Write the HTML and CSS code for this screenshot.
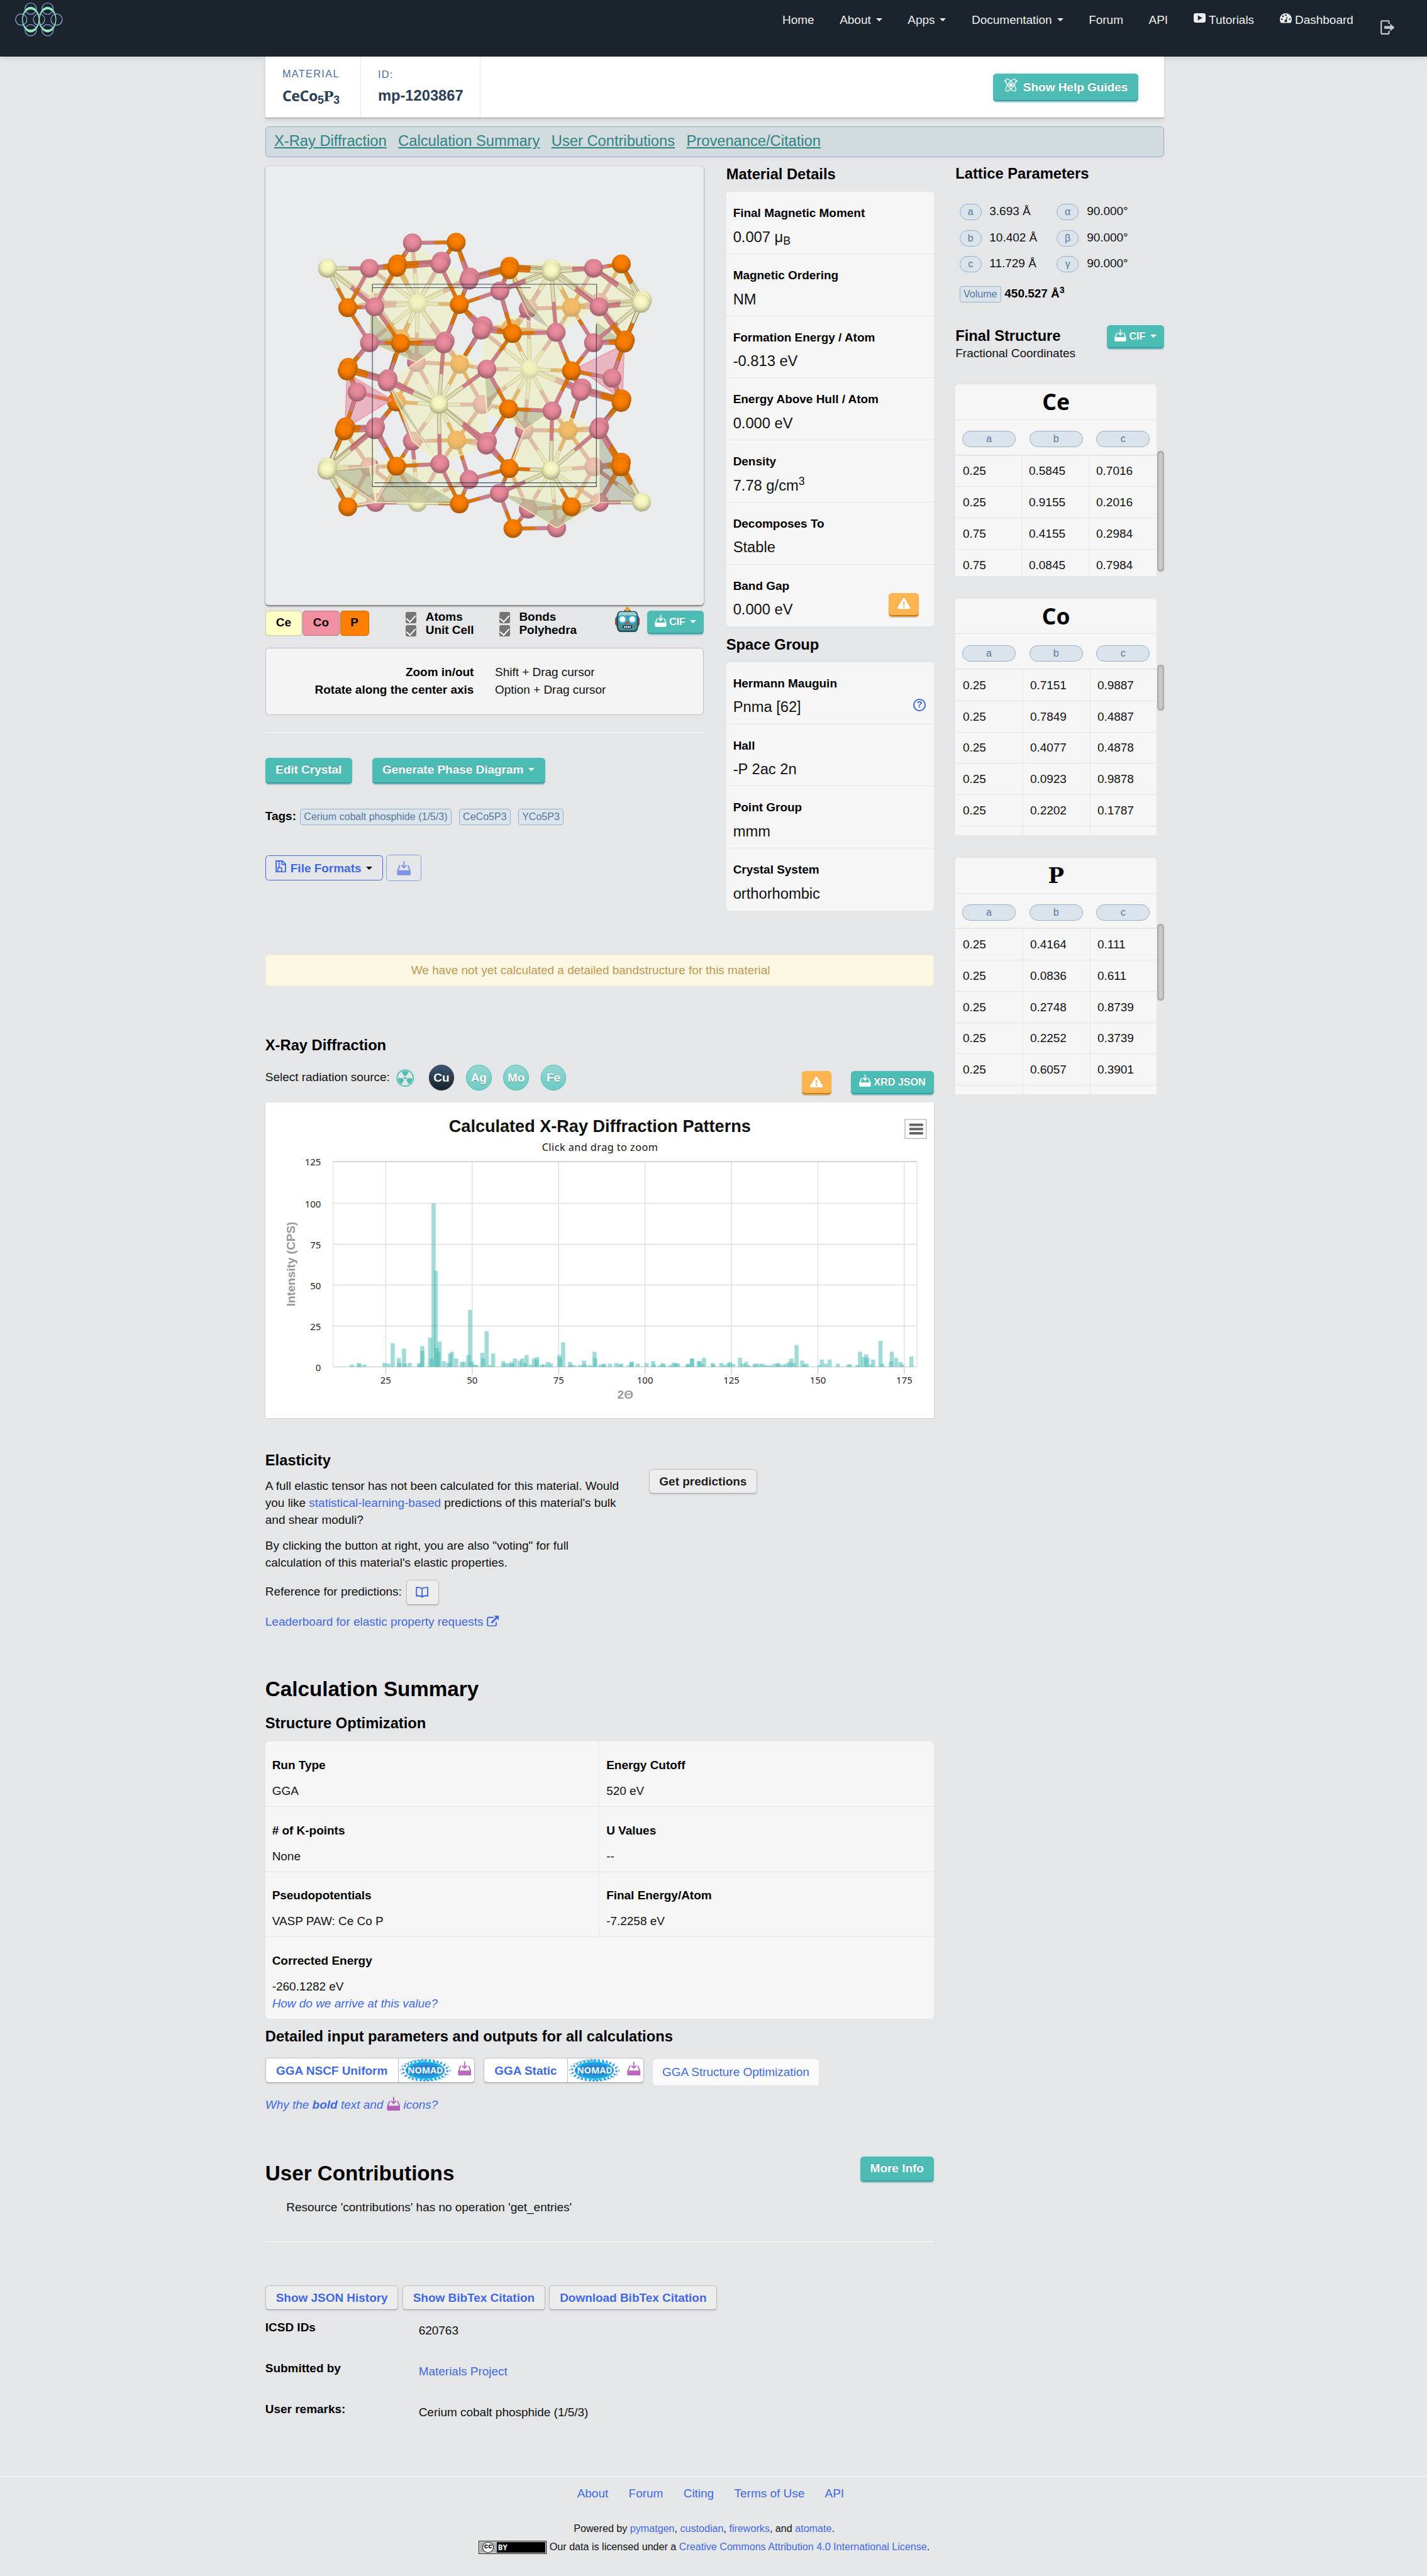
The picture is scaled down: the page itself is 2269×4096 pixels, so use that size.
FILE: index.html
```html
<!DOCTYPE html>
<html lang="en">
<head>
<meta charset="utf-8">
<title>CeCo5P3 (mp-1203867)</title>
<link rel="stylesheet" href="styles.css">
</head>
<body>
<svg class="defs" width="0" height="0">
  <symbol id="i-save" viewBox="0 0 17 17"><path d="M8.5 0v7.400M5.300 4.700l3.200 3.300 3.200-3.300" fill="none" stroke="currentColor" stroke-width="1.500"/><path d="M3.500 5L1.200 11.500M13.500 5l2.300 6.500" fill="none" stroke="currentColor" stroke-width="1.500"/><path d="M.3 11h16.400v5a1 1 0 0 1-1 1H1.300a1 1 0 0 1-1-1z" fill="currentColor"/></symbol>
  <symbol id="i-warn" viewBox="0 0 16 14"><path d="M8 0c.7 0 1.200.4 1.500 1l6.200 10.600c.8 1.400.1 2.400-1.200 2.400h-13C.2 14-.500 13 .3 11.600L6.500 1C6.800.4 7.300 0 8 0z" fill="#fff"/><path d="M7 4.300h2l-.3 4.400H7.300zM7 9.800h2v1.900H7z" fill="#fbb450"/></symbol>
  <symbol id="i-nomad" viewBox="0 0 63 28">
    <ellipse cx="31" cy="14" rx="29" ry="12.500" fill="none" stroke="#7fcff0" stroke-width="2" stroke-dasharray="1.800 3"/>
    <ellipse cx="31" cy="14" rx="26" ry="11.800" fill="none" stroke="#3f8fe4" stroke-width="2.500" stroke-dasharray="2 2.400"/>
    <ellipse cx="31" cy="14" rx="23" ry="10" fill="#1f9be0"/>
    <ellipse cx="31" cy="14" rx="20" ry="10.500" fill="none" stroke="#12c5ee" stroke-width="3" stroke-dasharray="3 2.500"/>
    <ellipse cx="31" cy="14" rx="22" ry="6" fill="#2b83cf"/>
  </symbol>
</svg>

<header class="navbar">
  <svg class="logo" viewBox="27 5 84 60">
    <g fill="#98e8bf" fill-rule="evenodd">
      <path d="M39.200 35a15.300 22.500 0 1 1 30.600 0a15.300 22.500 0 1 1-30.600 0zM40.700 35a13.800 17.700 0 1 0 27.600 0a13.800 17.700 0 1 0-27.600 0z"/>
      <path d="M68.900 35a15.300 22.500 0 1 1 30.600 0a15.300 22.500 0 1 1-30.600 0zM70.400 35a13.800 17.700 0 1 0 27.600 0a13.800 17.700 0 1 0-27.600 0z"/>
    </g>
    <g fill="none" stroke="#8fb2ec" stroke-width="1.300">
      <circle cx="54.500" cy="15.800" r="10"/><circle cx="84.200" cy="15.800" r="10"/>
      <circle cx="37.800" cy="35" r="10"/><circle cx="69.100" cy="35" r="10"/><circle cx="100" cy="35" r="10"/>
      <circle cx="54.500" cy="53.800" r="10"/><circle cx="84.200" cy="53.800" r="10"/>
    </g>
  </svg>
  <nav class="menu">
    <a>Home</a><a>About <i class="caret"></i></a><a>Apps <i class="caret"></i></a><a>Documentation <i class="caret"></i></a><a>Forum</a><a>API</a>
    <a class="withicon"><svg viewBox="0 0 14 12" width="14" height="12"><rect width="14" height="11" rx="2.500" fill="#eee"/><path d="M5 2.500v6l5-3z" fill="#1b242d"/></svg>Tutorials</a>
    <a class="withicon dash"><svg viewBox="0 0 14 12" width="14" height="12"><path d="M7 0a7 7 0 0 1 7 7c0 2-.600 3.300-1.300 4.500H1.300C.6 10.300 0 9 0 7a7 7 0 0 1 7-7z" fill="#eee"/><g fill="#1b242d"><circle cx="2.300" cy="7" r="1"/><circle cx="3.700" cy="3.600" r="1"/><circle cx="7" cy="2.200" r="1"/><circle cx="11.700" cy="7" r="1"/><circle cx="7" cy="9" r="1.500"/><path d="M6.600 9l1.600-5 .7.3-1 5z"/></g></svg>Dashboard</a>
    <svg class="logout" viewBox="0 0 17 17" width="17" height="17"><path d="M10 4.500V1.700a.8.8 0 0 0-.8-.8H1.700a.8.8 0 0 0-.8.8v13.600c0 .4.4.8.8.8h7.500c.4 0 .8-.4.8-.8v-2.800" fill="none" stroke="#c6c9cc" stroke-width="1.600"/><path d="M4.500 7h7V4.300L16.600 8.600l-5.100 4.300V10.200h-7z" fill="#c6c9cc"/></svg>
  </nav>
</header>

<div class="page">
  <section class="head">
    <div class="cell c1"><small>MATERIAL</small><b class="formula">CeCo<sub>5</sub><span class="slab">P</span><sub>3</sub></b></div>
    <div class="cell c2"><small class="id">ID:</small><b>mp-1203867</b></div>
    <a class="btn teal help"><svg viewBox="0 0 18 18" width="16.600" height="16.600"><g fill="none" stroke="#fff" stroke-width="1.100"><ellipse cx="9" cy="9" rx="3.600" ry="9.400" transform="rotate(38 9 9)"/><ellipse cx="9" cy="9" rx="3.600" ry="9.400" transform="rotate(-38 9 9)"/></g><circle cx="9" cy="9" r="2.300" fill="#fff"/><g fill="#fff"><circle cx="1.600" cy="4" r="1.200"/><circle cx="16.400" cy="4" r="1.200"/></g></svg>Show Help Guides</a>
  </section>
  <nav class="jump"><a>X-Ray Diffraction</a><a>Calculation Summary</a><a>User Contributions</a><a>Provenance/Citation</a></nav>

  <main class="cols">
    <div class="left">
      <div class="top">
        <div class="view">
          <div class="viewer"><svg id="crystal" viewBox="14 24 1513 1516">
            <defs>
              <radialGradient id="gC" cx=".5" cy=".38" r=".64"><stop offset="0" stop-color="#fdfdc8"/><stop offset=".5" stop-color="#efefb9"/><stop offset="1" stop-color="#a3a37f"/></radialGradient>
              <radialGradient id="gO" cx=".5" cy=".38" r=".64"><stop offset="0" stop-color="#ee8fa0"/><stop offset=".5" stop-color="#dd8394"/><stop offset="1" stop-color="#965a66"/></radialGradient>
              <radialGradient id="gP" cx=".5" cy=".38" r=".64"><stop offset="0" stop-color="#ff8100"/><stop offset=".5" stop-color="#f07900"/><stop offset="1" stop-color="#a05100"/></radialGradient>
            </defs>
          </svg></div>
          <div class="controls">
            <div class="chips"><span class="ce">Ce</span><span class="co">Co</span><span class="p">P</span></div>
            <div class="checks"><label><i class="box"></i>Atoms</label><label><i class="box"></i>Unit Cell</label></div>
            <div class="checks"><label><i class="box"></i>Bonds</label><label><i class="box"></i>Polyhedra</label></div>
            <svg class="robot" viewBox="0 0 29 30" width="29" height="30">
              <rect x="0" y="12.500" width="29" height="9" rx="1.500" fill="#b93a38"/><rect x="1.300" y="11" width="26.400" height="12" fill="#2e5965"/>
              <ellipse cx="14.500" cy="5" rx="4" ry="2.500" fill="#5b4a86"/><circle cx="14.500" cy="2.600" r="2.600" fill="#f6a21c"/>
              <path d="M7 5h15c3 0 4.500 2 4.800 5l.3 13c0 4-2 6.500-5 6.500H7c-3 0-5-2.500-5-6.500l.2-13C2.500 7 4 5 7 5z" fill="#1c5560"/>
              <path d="M7.500 6h14c2.500 0 3.800 1.500 4 4l.2 12.500c0 3-1.500 5-4 5h-14c-2.500 0-4-2-4-5L3.700 10c.2-2.500 1.300-4 3.800-4z" fill="#4f9092"/><path d="M7.500 6h14c2.500 0 3.800 1.500 4 4H3.700c.2-2.500 1.300-4 3.800-4z" fill="#a9cdcb"/>
              <circle cx="8.700" cy="14.500" r="4.300" fill="#fff" stroke="#35b8e0" stroke-width="1.800"/><circle cx="20.300" cy="14.500" r="4.300" fill="#fff" stroke="#35b8e0" stroke-width="1.800"/>
              <path d="M14.500 15.500l2.200 4h-4.400z" fill="#d8463e"/><rect x="9" y="21.500" width="11" height="4" rx="1.500" fill="#163d46"/><path d="M10.500 23.500h8" stroke="#fff" stroke-width="2" stroke-dasharray="1.500 .6"/>
            </svg>
            <a class="btn teal small cif"><svg class="ic"><use href="#i-save"/></svg>CIF <i class="caret"></i></a>
          </div>
          <div class="hints"><b>Zoom in/out</b><span>Shift + Drag cursor</span><b>Rotate along the center axis</b><span>Option + Drag cursor</span></div>
          <div class="rule"></div>
          <div class="actions"><a class="btn teal">Edit Crystal</a><a class="btn teal">Generate Phase Diagram <i class="caret"></i></a></div>
          <div class="tags"><b>Tags:</b><span class="tag">Cerium cobalt phosphide (1/5/3)</span><span class="tag">CeCo5P3</span><span class="tag">YCo5P3</span></div>
          <div class="files"><a class="ff"><svg viewBox="0 0 13 15" width="12.500" height="14.500"><path d="M.8.800h7.600l3.800 3.700v9.700H.8z" fill="none" stroke="#4169e1" stroke-width="1.500"/><path d="M4.500 1v8" stroke="#4169e1" stroke-width="2.400" stroke-dasharray="1.200 .8"/><path d="M3 9h4.500v5H3zM8 1v4h4" fill="none" stroke="#4169e1" stroke-width="1.300"/></svg>File Formats <i class="caret"></i></a><a class="dl"><svg width="16.500" height="17"><use href="#i-save"/></svg></a></div>
        </div>
        <div class="details">
          <h4>Material Details</h4>
          <div class="card">
            <div class="row"><b>Final Magnetic Moment</b><p>0.007 μ<sub>B</sub></p></div>
            <div class="row"><b>Magnetic Ordering</b><p>NM</p></div>
            <div class="row"><b>Formation Energy / Atom</b><p>-0.813 eV</p></div>
            <div class="row"><b>Energy Above Hull / Atom</b><p>0.000 eV</p></div>
            <div class="row"><b>Density</b><p>7.78 g/cm<sup>3</sup></p></div>
            <div class="row"><b>Decomposes To</b><p>Stable</p></div>
            <div class="row split"><div><b>Band Gap</b><p>0.000 eV</p></div><a class="btn warn"><svg width="15" height="13"><use href="#i-warn"/></svg></a></div>
          </div>
          <h4 class="sg">Space Group</h4>
          <div class="card">
            <div class="row split"><div><b>Hermann Mauguin</b><p>Pnma [62]</p></div><span class="q">?</span></div>
            <div class="row"><b>Hall</b><p>-P 2ac 2n</p></div>
            <div class="row"><b>Point Group</b><p>mmm</p></div>
            <div class="row"><b>Crystal System</b><p>orthorhombic</p></div>
          </div>
        </div>
      </div>

      <div class="alert">We have not yet calculated a detailed bandstructure for this material</div>

      <section class="xrd">
        <h4>X-Ray Diffraction</h4>
        <div class="sources"><span>Select radiation source:</span>
          <svg class="rad" viewBox="-11 -11 22 22" width="21" height="21"><circle r="10" fill="none" stroke="#4cbcb4" stroke-width="1.400"/><circle r="1.500" fill="#4cbcb4"/><g fill="#4cbcb4"><path id="blade" d="M-1.400-2.400L-4.200-7.700A8.700 8.700 0 0 1 4.200-7.700L1.400-2.400A2.800 2.800 0 0 0-1.400-2.400z"/><use href="#blade" transform="rotate(120)"/><use href="#blade" transform="rotate(240)"/></g></svg>
          <a class="el on">Cu</a><a class="el">Ag</a><a class="el">Mo</a><a class="el">Fe</a>
          <a class="btn warn w2"><svg width="15" height="13"><use href="#i-warn"/></svg></a>
          <a class="btn teal small json"><svg class="ic"><use href="#i-save"/></svg>XRD JSON</a>
        </div>
        <div class="chart"><svg id="chart" viewBox="0 0 784.700 370.400"></svg></div>
      </section>

      <section class="elastic">
        <div class="etext">
          <h4>Elasticity</h4>
          <p>A full elastic tensor has not been calculated for this material. Would<br>you like <a>statistical-learning-based</a> predictions of this material's bulk<br>and shear moduli?</p>
          <p>By clicking the button at right, you are also "voting" for full<br>calculation of this material's elastic properties.</p>
          <div class="ref"><span>Reference for predictions:</span> <span class="btn plain book"><svg viewBox="0 0 15 13" width="15" height="13"><path d="M7.500 2.200C6 .9 3.500.7.900.9v9.600c2.600-.2 5.100 0 6.600 1.200 1.500-1.200 4-1.400 6.600-1.200V.9C11.500.7 9 .9 7.500 2.200zV11.700" fill="none" stroke="#4169e1" stroke-width="1.400"/><path d="M0 11h5.500l2 1.300L9.500 11H15" fill="none" stroke="#4169e1"/></svg></span></div>
          <p class="lead"><a>Leaderboard for elastic property requests <svg viewBox="0 0 14 13" width="14" height="13"><path d="M8 2H2.500C1.500 2 .9 2.600.9 3.500v7c0 1 .6 1.600 1.600 1.600h7c1 0 1.600-.6 1.600-1.600V7.500" fill="none" stroke="#4169e1" stroke-width="1.400"/><path d="M5.500 8.500L12 2" stroke="#4169e1" stroke-width="2"/><path d="M8.500 0H14v5.500z" fill="#4169e1"/></svg></a></p>
        </div>
        <a class="btn plain dark get">Get predictions</a>
      </section>

      <section class="calc">
        <h3>Calculation Summary</h3>
        <h4>Structure Optimization</h4>
        <div class="card params">
          <div><b>Run Type</b><p>GGA</p></div><div><b>Energy Cutoff</b><p>520 eV</p></div>
          <div><b># of K-points</b><p>None</p></div><div><b>U Values</b><p>--</p></div>
          <div><b>Pseudopotentials</b><p>VASP PAW: Ce Co P</p></div><div><b>Final Energy/Atom</b><p>-7.2258 eV</p></div>
          <div class="wide"><b>Corrected Energy</b><p>-260.1282 eV</p><a>How do we arrive at this value?</a></div>
        </div>
        <h4 class="det">Detailed input parameters and outputs for all calculations</h4>
        <div class="runs">
          <span class="run"><a>GGA NSCF Uniform</a><span><span class="nomad"><svg><use href="#i-nomad"/></svg><em>NOMAD</em></span><svg class="pk"><use href="#i-save"/></svg></span></span>
          <span class="run"><a>GGA Static</a><span><span class="nomad"><svg><use href="#i-nomad"/></svg><em>NOMAD</em></span><svg class="pk"><use href="#i-save"/></svg></span></span>
          <a class="thin">GGA Structure Optimization</a>
        </div>
        <p class="why">Why the <b>bold</b> text and <svg class="pk"><use href="#i-save"/></svg> icons?</p>
      </section>

      <section class="contrib">
        <div class="ctop"><h3>User Contributions</h3><a class="btn teal">More Info</a></div>
        <p>Resource 'contributions' has no operation 'get_entries'</p>
        <div class="rule"></div>
      </section>

      <section class="prov">
        <div class="pbtns"><a class="btn plain">Show JSON History</a><a class="btn plain">Show BibTex Citation</a><a class="btn plain">Download BibTex Citation</a></div>
        <dl><dt>ICSD IDs</dt><dd>620763</dd><dt>Submitted by</dt><dd><a>Materials Project</a></dd><dt>User remarks:</dt><dd>Cerium cobalt phosphide (1/5/3)</dd></dl>
      </section>
    </div>

    <aside class="right">
      <h4>Lattice Parameters</h4>
      <div class="lattice">
        <span class="pill">a</span><span>3.693 Å</span><span class="pill">α</span><span>90.000°</span>
        <span class="pill">b</span><span>10.402 Å</span><span class="pill">β</span><span>90.000°</span>
        <span class="pill">c</span><span>11.729 Å</span><span class="pill">γ</span><span>90.000°</span>
      </div>
      <div class="volume"><span class="tag">Volume</span><b>450.527 Å<sup>3</sup></b></div>
      <div class="final"><div><h4>Final Structure</h4><p>Fractional Coordinates</p></div><a class="btn teal small cif"><svg class="ic"><use href="#i-save"/></svg>CIF <i class="caret"></i></a></div>

      <div class="site s1"><div class="card"><h2>Ce</h2><div class="abc"><span class="pill">a</span><span class="pill">b</span><span class="pill">c</span></div>
        <div class="rows"><span>0.25</span><span>0.5845</span><span>0.7016</span><span>0.25</span><span>0.9155</span><span>0.2016</span><span>0.75</span><span>0.4155</span><span>0.2984</span><span>0.75</span><span>0.0845</span><span>0.7984</span></div></div><i class="bar"></i></div>
      <div class="site s2"><div class="card"><h2>Co</h2><div class="abc"><span class="pill">a</span><span class="pill">b</span><span class="pill">c</span></div>
        <div class="rows"><span>0.25</span><span>0.7151</span><span>0.9887</span><span>0.25</span><span>0.7849</span><span>0.4887</span><span>0.25</span><span>0.4077</span><span>0.4878</span><span>0.25</span><span>0.0923</span><span>0.9878</span><span>0.25</span><span>0.2202</span><span>0.1787</span><span></span><span></span><span></span></div></div><i class="bar"></i></div>
      <div class="site s3"><div class="card"><h2 class="slab">P</h2><div class="abc"><span class="pill">a</span><span class="pill">b</span><span class="pill">c</span></div>
        <div class="rows"><span>0.25</span><span>0.4164</span><span>0.111</span><span>0.25</span><span>0.0836</span><span>0.611</span><span>0.25</span><span>0.2748</span><span>0.8739</span><span>0.25</span><span>0.2252</span><span>0.3739</span><span>0.25</span><span>0.6057</span><span>0.3901</span><span></span><span></span><span></span></div></div><i class="bar"></i></div>
    </aside>
  </main>
</div>

<footer>
  <nav><a>About</a><a>Forum</a><a>Citing</a><a>Terms of Use</a><a>API</a></nav>
  <p>Powered by <a>pymatgen</a>, <a>custodian</a>, <a>fireworks</a>, and <a>atomate</a>.</p>
  <p class="lic"><span class="ccby"><i>cc</i><b>BY</b></span> Our data is licensed under a <a>Creative Commons Attribution 4.0 International License</a>.</p>
</footer>
<script src="script.js"></script>
</body>
</html>
```
FILE: styles.css
```css
* { box-sizing: border-box; }
html { background: #e4e6e8; overflow: hidden; }
body { margin: 0; zoom: 1.35489; width: 1674.67px; height: 3023px; background: #e4e6e8; color: #111; font: 14px/20px "Liberation Sans", Arial, sans-serif; overflow: hidden; }
h2, h3, h4, p, dl, dd { margin: 0; }
h3, h4, b, dt { color: #000; }
h4 { font-size: 17.500px; line-height: 20px; font-weight: 700; }
h3 { font-size: 24.500px; line-height: 40px; font-weight: 700; }
a { color: #4169e1; }
sub, sup { font-size: 75%; line-height: 0; position: relative; vertical-align: baseline; }
sub { bottom: -.25em; }
sup { top: -.5em; }
.defs { position: absolute; }
.caret { display: inline-block; width: 0; height: 0; border: 4px solid transparent; border-top-color: currentColor; border-bottom: 0; margin-left: 2px; vertical-align: 3px; }

.navbar { height: 66.670px; background: #1b242d; display: flex; justify-content: space-between; box-shadow: 0 1px 8px rgba(0,0,0,.14); }
.logo { width: 56px; height: 40px; margin: 3.300px 0 0 18px; }
.menu { display: flex; padding: 13px 37.500px 0 0; align-items: flex-start; }
.menu a { color: #eee; padding: 0 15px; white-space: nowrap; }
.menu .withicon svg { margin-right: 4px; vertical-align: 0; }
.menu .logout { margin: 10.500px 0 0 17px; }

.page { width: 1054.670px; margin-left: 311.330px; }
.head { position: relative; height: 72.300px; background: #fff; display: flex; border-bottom: 1px solid #95989b; box-shadow: 0 3px 4px rgba(0,0,0,.1); }
.cell { border-right: 1px solid #e8eaec; padding: 10.400px 20px 0; white-space: nowrap; }
.cell small { display: block; font-size: 12px; letter-spacing: 1px; color: #4b709b; height: 24.800px; }
.cell small.id { padding-top: .7px; }
.cell b { font-size: 17.500px; color: #2b3f55; display: block; line-height: 22px; }
.c1 { width: 112.200px; }
.c2 { width: 140px; }
.cell .formula { font-family: "Noto Sans", sans-serif; font-size: 17px; letter-spacing: -.3px; }
.formula .slab { font-family: "DejaVu Serif", serif; font-size: 16px; }
.formula sub { font-family: "Liberation Sans", sans-serif; font-size: 13px; font-weight: 700; }
.btn { display: inline-flex; align-items: center; justify-content: center; height: 30px; padding: 0 12px 1px; border-radius: 4px; font-weight: 700; white-space: pre; }
.teal { background: #4cbcb4; color: #fff; border-bottom: 2px solid #3a9ba1; text-shadow: 0 -1px 0 rgba(0,0,0,.22); box-shadow: 0 1px 1px rgba(58,155,161,.45); }
.small { font-size: 11.900px; height: 27.400px; padding: 0 10px; }
.ic { width: 14px; height: 15px; margin: -3px 3px 0 0; }
.cif { width: 66.800px; padding: 0; }
.warn { width: 35.300px; height: 27.300px; padding: 0; background: #fbb450; border-bottom: 2px solid #c77c16; box-shadow: 0 1px 1px rgba(160,90,0,.4); }
.plain { background: #ededee; border: 1px solid #bcbec0; border-bottom-color: #989b9e; color: #4169e1; height: 29px; box-shadow: 0 1px 2px rgba(0,0,0,.07); }
.plain.dark { color: #1d1d1d; }
.help { height: 32px; width: 170.300px; margin: 20px 30px 0 auto; padding: 0; }
.help svg { margin: -4px 6px 0 0; overflow: visible; }
.jump { height: 35.700px; margin-top: 9.700px; border: 1px solid #92adca; border-radius: 4px; background: #d2dbdd; display: flex; gap: 13.600px; padding: 6.600px 9.700px; }
.jump a { font-size: 17.500px; color: #2e8385; text-decoration: underline; }

.cols { display: grid; grid-template-columns: 784.700px 244.700px; gap: 25.300px; align-items: start; }
.top { display: grid; grid-template-columns: 514.700px 243.700px; justify-content: space-between; height: 935.800px; }
.viewer { margin-top: 10.400px; height: 515.600px; background: #e9ebec; border-radius: 4px; box-shadow: 0 1px 2px rgba(0,0,0,.5); }
.viewer svg, .chart svg { display: block; width: 100%; height: 100%; }
.controls { margin-top: 6.600px; height: 28.900px; display: flex; position: relative; }
.chips { display: flex; gap: .6px; width: 164.700px; }
.chips span { height: 28.900px; border: 1px solid rgba(0,0,0,.2); border-radius: 4px; font-weight: 700; color: #000; text-align: center; line-height: 27px; }
.chips .ce { width: 43px; background: #ffffc7; }
.chips .co { width: 43.500px; background: #f190a2; }
.chips .p { width: 34px; background: #ff8000; }
.checks { width: 109.800px; }
.checks label { display: flex; height: 15.200px; line-height: 15.200px; font-weight: 700; color: #000; gap: 10.500px; white-space: nowrap; }
.box { width: 13px; height: 13px; margin-top: 1.500px; background: #757575; border-radius: 2px; display: flex; justify-content: center; flex: none; }
.box::after { content: ""; width: 5px; height: 8.500px; margin-top: 1.200px; border: solid #fff; border-width: 0 1.600px 1.600px 0; transform: rotate(42deg); flex: none; }
.robot { margin: -4.500px 8.500px 0 26.300px; flex: none; }
.hints { margin-top: 14.200px; height: 78.900px; background: #f4f4f4; border: 1px solid #b9bdc1; border-radius: 4px; padding-top: 18.200px; display: grid; grid-template-columns: 244px 1fr; grid-auto-rows: 20px; column-gap: 24.800px; }
.hints b { text-align: right; }
.rule { height: 1px; background: #fff; margin-top: 20.200px; }
.actions { margin-top: 29.400px; display: flex; gap: 23.700px; }
.tags { margin-top: 28.300px; height: 20px; display: flex; gap: 8.700px; }
.tags b { margin-right: -4.300px; }
.tag { display: inline-block; height: 19.200px; line-height: 14px; padding: 1.800px 4px; margin-top: 1.300px; font-size: 11.844px; color: #56779e; background: #dce4eb; border: 1px solid #94afcc; border-radius: 3px; }
.files { margin-top: 35.600px; display: flex; align-items: center; gap: 4px; }
.ff { height: 29.300px; width: 138px; border: 1px solid #4169e1; border-radius: 4px; font-weight: 700; display: flex; align-items: center; justify-content: center; white-space: pre; }
.ff svg { margin: -4px 5px 0 0; }
.ff .caret { color: #000; }
.dl { width: 41.500px; height: 30.600px; border: 1px solid #8aa1e8; border-radius: 4px; color: #7d97e5; display: flex; align-items: center; justify-content: center; }

.details h4 { margin: 10.300px 0 10.700px; }
.details h4.sg { margin: 11.300px 0 10.500px; }
.card { background: #f6f6f6; border-radius: 4px; overflow: hidden; }
.row { height: 72.870px; padding: 14.700px 8px 0; border-bottom: 1px solid #e2e4e5; }
.row:last-child { border: 0; }
.row b { display: block; }
.row p { font-size: 17.500px; margin-top: 8.500px; color: #111; }
.split { display: flex; justify-content: space-between; }
.split .warn { margin: 18.500px 9.800px 0 0; }
.q { width: 15px; height: 15px; border: 2px solid #4169e1; border-radius: 50%; color: #4169e1; font: 700 11px/11.500px "Liberation Sans", sans-serif; text-align: center; margin: 28px 1.500px 0 0; }

.alert { height: 36.900px; border: 1px solid #fbeed5; border-radius: 4px; background: #fcf7e2; color: #c09853; text-align: center; padding: 7.500px 35px 0 14px; }
.xrd { height: 507.300px; padding-top: 59.800px; }
.sources { display: flex; height: 35px; margin-top: 13px; width: 784.700px; }
.sources > span { width: 153.500px; padding-top: 4px; }
.rad { margin: 5.200px 17.300px 0 0; }
.el { width: 30px; height: 30px; border-radius: 50%; margin-right: 13.800px; border: 1px solid #4cbcb4; background: linear-gradient(#93d7d2, #70cbc4); color: #fff; font-weight: 700; text-align: center; line-height: 30px; text-shadow: 0 1px 1px rgba(0,0,0,.3); }
.el.on { background: linear-gradient(#3f5770, #17222d); border-color: #24364a; }
.w2 { margin: 7.200px 22.500px 0 auto; }
.json { width: 97.500px; padding: 0; margin-top: 7.200px; }
.chart { height: 370.400px; margin-top: 9.200px; background: #fff; box-shadow: 0 1px 1px rgba(0,0,0,.4); }

.elastic { display: flex; height: 298.200px; padding-top: 39.700px; }
.etext { width: 450px; }
.etext h4 { margin-bottom: 9.600px; }
.etext p { white-space: nowrap; margin-bottom: 10.300px; }
.ref { display: flex; align-items: center; gap: 5px; height: 29px; }
.ref > span:first-child { margin-top: -2.500px; }
.ref .btn { width: 38.300px; padding: 0; }
.etext .lead { margin-top: 9.900px; }
.lead svg { vertical-align: -1px; }
.get { width: 127.500px; margin-top: 20.100px; padding: 0; }

.calc { height: 567.900px; }
.calc h4 { margin: 10.300px 0 11px; }
.params { display: grid; grid-template-columns: 392.300px 392.400px; }
.params div { height: 76.500px; padding: 17.500px 8px 0; border-bottom: 1px solid #e2e4e5; }
.params div:nth-child(odd):not(.wide) { border-right: 1px solid #e2e4e5; }
.params b, .params p { display: block; }
.params p { margin-top: 10.200px; }
.params .wide { grid-column: 1 / 3; height: 96px; border: 0; padding-top: 17.900px; }
.wide a, .why { font-style: italic; color: #4169e1; }
.calc h4.det { margin: 10.800px 0 14.500px; }
.runs { display: flex; gap: 10.200px; height: 33px; }
.run { display: flex; height: 30px; background: #fff; border: 1px solid #bcbec0; border-bottom-color: #989b9e; border-radius: 4px; box-shadow: 0 1px 2px rgba(0,0,0,.07); font-weight: 700; }
.run a { padding: 4.600px 12px 0; border-right: 1px solid #bcbec0; }
.run > span { display: flex; width: 89px; }
.nomad { position: relative; width: 63px; height: 28px; margin-right: 6.500px; }
.nomad svg { width: 63px; height: 28px; display: block; }
.nomad em { position: absolute; left: 0; top: 4px; width: 63px; text-align: center; font: 700 10.500px/20px "Noto Sans", sans-serif; color: #e8f7ff; }
.pk { width: 16px; height: 18px; color: #bb6abb; }
.run .pk { margin-top: 3px; }
.thin { background: #fafafb; border: 1px solid #fff; border-radius: 4px; height: 31.300px; width: 194.400px; text-align: center; padding-top: 4.800px; margin-top: 1.700px; }
.why { margin-top: 12.600px; height: 20px; }
.why b { color: #4169e1; }
.why .pk { color: #b25fb5; margin: -4px 0; vertical-align: 1px; }

.contrib { height: 151.800px; }
.ctop { display: flex; justify-content: space-between; height: 49.900px; }
.contrib p { padding-left: 24.700px; }
.contrib .rule { margin-top: 29.800px; }
.contrib, .calc { padding-top: .1px; }
.ctop .btn { width: 86.700px; padding: 0; }
.prov { height: 223.700px; }
.pbtns { display: flex; gap: 4.700px; }
.pbtns .btn { padding: 0 11.700px; }
dl { display: grid; grid-template-columns: 180px 1fr; grid-auto-rows: 48px; padding-top: 10.200px; }
dt { font-weight: 700; }
dd { padding-top: 3.800px; }

.right h4 { margin-top: 9.900px; }
.lattice { display: grid; grid-template-columns: 35.200px 78.800px 35.500px auto; grid-auto-rows: 30.700px; padding: 24.900px 0 0 4.700px; line-height: 18px; }
.pill { width: 26px; height: 19.200px; font-size: 11.844px; line-height: 17px; text-align: center; color: #56779e; background: #dce4eb; border: 1px solid #94afcc; border-radius: 10px; }
.volume { display: flex; gap: 4px; padding-left: 4.700px; margin-top: 3px; height: 20px; }
.final { display: flex; justify-content: space-between; margin-top: 27.500px; height: 69.400px; }
.final h4 { margin-top: 2.900px; }
.site { display: flex; gap: .8px; }
.site .card { width: 236px; border-radius: 4px 4px 0 0; }
.site h2 { height: 41.700px; border-bottom: 1px solid #e2e4e5; font: 700 26px/40.500px "Noto Sans", sans-serif; text-align: center; color: #000; }
.site h2.slab { font-family: "DejaVu Serif", serif; font-size: 25px; line-height: 42.500px; }
.abc { display: flex; justify-content: space-between; height: 42px; padding: 12.800px 8px 0; border-bottom: 2px solid #e4e6e8; }
.abc .pill { width: 62.700px; }
.rows { display: grid; grid-template-columns: 78.900px 79px 1fr; margin-left: .7px; }
.rows span { height: 36.700px; padding: 8px; border-bottom: 1px solid #e2e4e5; border-right: 1px solid #e2e4e5; }
.rows span:nth-child(3n) { border-right: 0; }
.s1 { height: 251.400px; }
.s1 .card { height: 224.600px; }
.s1 .rows { grid-template-columns: 77.500px 79px 1fr; }
.s2 { height: 304.300px; }
.s2 .card, .s3 .card { height: 277.600px; }
.bar { width: 7.800px; border-radius: 4px; background: #cacccd; box-shadow: inset 0 0 3px rgba(0,0,0,.45); }
.s1 .bar { height: 141.500px; margin-top: 78px; }
.s2 .bar { height: 54px; margin-top: 77.700px; }
.s3 .bar { height: 90px; margin-top: 77.500px; }

footer { border-top: 1px solid #fff; height: 116.800px; position: relative; }
footer nav { display: flex; gap: 23.900px; padding: 9.800px 0 0 677.300px; height: 49.500px; }
footer p { width: 1652.700px; text-align: center; font-size: 11.900px; height: 20.600px; margin-top: 1px; }
.ccby { display: inline-flex; align-items: center; gap: 5px; width: 80px; height: 15px; vertical-align: top; margin-top: 3.400px; background: linear-gradient(90deg, #aab2ab 21px, #000 21px); border: 1px solid #000; outline: 1px solid #fff; outline-offset: -2px; padding-left: 4px; }
.ccby i { width: 13px; height: 13px; border-radius: 50%; background: #fff; border: 1px solid #000; color: #000; font: 700 8px/9.500px Inter, sans-serif; text-align: center; }
.ccby b { color: #fff; font: 700 8.500px/13px "Noto Sans", sans-serif; }
```
FILE: script.js
```js
const NS = 'http://www.w3.org/2000/svg';
function add(parent, tag, attrs, text) {
  const el = document.createElementNS(NS, tag);
  for (const k in attrs) el.setAttribute(k, attrs[k]);
  if (text) el.textContent = text;
  parent.appendChild(el);
  return el;
}

/* Crystal structure: projected sites, back sites are seen through the polyhedra */
const sites = {
  C: { back: [[539,498],[926,725],[539,1185]],
       front: [[228,377],[1001,378],[1000,389],[1315,487],[1310,498],[612,847],[229,1063],[226,1074],[999,1074],[1312,1184]] },
  O: { back: [[535,702],[762,847],[907,935],[521,973],[921,516],[394,495],[1165,495],[1147,1062],[373,1062],[921,1208],[1019,1273],[394,1185],[1166,1185]],
       front: [[521,289],[373,377],[621,352],[616,362],[720,407],[716,418],[823,455],[391,510],[1146,377],[1165,510],[1017,598],[373,634],[634,628],[629,638],[765,575],[759,590],[437,758],[434,769],[330,804],[778,725],[1146,634],[1210,756],[1107,790],[1101,802],[1003,869],[394,924],[390,934],[1167,924],[1163,934],[780,974],[776,987],[616,1052],[717,1106],[821,1153]] },
  P: { back: [[1070,512],[684,708],[674,970],[1058,937],[466,838],[860,585],[480,620]],
       front: [[672,287],[470,362],[467,374],[857,370],[855,382],[1242,362],[298,513],[683,502],[480,636],[866,602],[1256,624],[1252,635],[300,719],[296,731],[1070,731],[853,862],[1244,828],[1241,840],[291,924],[286,938],[466,1060],[855,1068],[1242,1046],[1240,1062],[298,1200],[683,1190],[1070,1200],[868,1275]] }
};
const tone = { C: '#dcdcb0', O: '#d27a8b', P: '#e27200' };
const svg = document.getElementById('crystal');
const layer = { back: add(svg, 'g', {}), poly: add(svg, 'g', {}), front: add(svg, 'g', {}) };
const atoms = [];
for (const t in sites) for (const z of ['back', 'front']) for (const [x, y] of sites[t][z]) atoms.push({ t, z, x, y });

function bond(g, a, b) {
  const mx = (a.x + b.x) / 2, my = (a.y + b.y) / 2;
  for (const s of [a, b]) {
    add(g, 'line', { x1: s.x, y1: s.y, x2: mx, y2: my, stroke: '#7a5a3c', 'stroke-opacity': .6, 'stroke-width': 14 });
    add(g, 'line', { x1: s.x, y1: s.y, x2: mx, y2: my, stroke: tone[s.t], 'stroke-width': 10.5 });
  }
}
for (let i = 0; i < atoms.length; i++) for (let j = i + 1; j < atoms.length; j++) {
  const a = atoms[i], b = atoms[j];
  if (a.t === b.t) continue;
  const d = Math.hypot(a.x - b.x, a.y - b.y);
  const limit = a.t === 'C' || b.t === 'C' ? 217 : 160;
  if (d > limit || d < 40) continue;
  bond(layer[a.z === 'back' || b.z === 'back' ? 'back' : 'front'], a, b);
}
for (const a of atoms) add(layer[a.z], 'circle', { cx: a.x, cy: a.y, r: 32.5, fill: `url(#g${a.t})` });

const yellow = [
  '375,400 521,300 640,365 715,420 684,502 640,640 535,700 373,634',
  '770,590 870,540 1010,590 1070,731 1003,869 907,935 778,870 762,720',
  '435,765 631,640 778,725 778,985 616,1052 521,973 470,840',
  '228,377 375,377 391,510 298,513',
  '856,377 1001,350 1146,377 1165,510 1017,598 921,516',
  '1165,377 1245,370 1312,493 1253,630 1146,634 1155,510',
  '226,1073 290,940 391,932 394,1185 298,1200',
  '373,1062 466,1030 616,1052 717,1106 684,1189 394,1185',
  '823,1153 907,935 1003,869 1165,932 1166,1185 1019,1273'
];
for (const p of yellow) add(layer.poly, 'polygon', { points: p, fill: '#eeeebb', 'fill-opacity': .55, stroke: '#f3f3c4', 'stroke-width': 3 });
const shade = ['373,634 631,634 535,700', '375,520 480,634 373,634', '770,740 830,790 778,870', '853,862 1003,869 907,935', '435,765 616,1052 470,850', '1165,932 1312,1184 1166,1185', '226,1073 394,1185 373,1062', '466,1060 684,1189 394,1185', '856,400 1000,590 921,540', '823,1153 1070,1200 1166,1185 1019,1273', '1155,560 1253,630 1146,634'];
for (const p of shade) add(layer.poly, 'polygon', { points: p, fill: '#8f9070', 'fill-opacity': .38, stroke: '#f0f0bd', 'stroke-width': 2.5 });
for (const p of ['296,740 450,830 288,930', '1090,720 1252,640 1246,830']) add(layer.poly, 'polygon', { points: p, fill: '#ea7f94', 'fill-opacity': .5, stroke: '#f190a2', 'stroke-width': 3 });
add(svg, 'path', { d: 'M383 1130V540M383 460V432H1157V480M1156 570V1130H383M383 444H930M390 1117H1155', fill: 'none', stroke: '#22344c', 'stroke-width': 2.5, 'stroke-opacity': .85 });

/* Diffraction chart: pairs of position, height in plot units */
const chart = document.getElementById('chart');
const X = v => v * .5102 - 4.67, Y = v => v * .30612 - 94.1;
const font = 'Noto Sans', sans = 'Liberation Sans';
add(chart, 'text', { x: 392.5, y: 34.5, 'text-anchor': 'middle', 'font-family': sans, 'font-weight': 700, 'font-size': 20, fill: '#111' }, 'Calculated X-Ray Diffraction Patterns');
add(chart, 'text', { x: 392.5, y: 56.8, 'text-anchor': 'middle', 'font-family': font, 'font-size': 12, textLength: 136, fill: '#111' }, 'Click and drag to zoom');
add(chart, 'rect', { x: 750.6, y: 20, width: 25, height: 22.3, fill: '#fff', stroke: '#b5b5b5' });
for (const y of [26.2, 31.2, 36.2]) add(chart, 'rect', { x: 755.5, y: y - 1.5, width: 16.5, height: 3, rx: 1.2, fill: '#666' });
[1321, 1164, 1007, 851, 694, 534].forEach((v, i) => {
  add(chart, 'line', { x1: X(165), x2: X(1508), y1: Y(v), y2: Y(v), stroke: i === 5 ? '#c8c8c8' : i ? '#dedede' : '#c0d0e0', 'stroke-width': 1 });
  add(chart, 'text', { x: X(137), y: Y(v) + 4.7, 'text-anchor': 'end', 'font-family': font, 'font-size': 11, fill: '#222' }, String(i * 25));
});
[165, 1508].forEach(v => add(chart, 'line', { x1: X(v), x2: X(v), y1: Y(534), y2: Y(1321), stroke: '#dedede', 'stroke-width': .8 }));
[286, 484.8, 683.6, 882.4, 1081.2, 1280, 1478.8].forEach((v, i) => {
  add(chart, 'line', { x1: X(v), x2: X(v), y1: Y(534), y2: Y(1321), stroke: '#dedede', 'stroke-width': 1 });
  add(chart, 'line', { x1: X(v), x2: X(v), y1: Y(1321), y2: Y(1350), stroke: '#c0d0e0', 'stroke-width': 1 });
  add(chart, 'text', { x: X(v), y: Y(1385), 'text-anchor': 'middle', 'font-family': font, 'font-size': 11, fill: '#222' }, String(25 + i * 25));
});
add(chart, 'text', { x: X(837), y: Y(1443), 'text-anchor': 'middle', 'font-family': sans, 'font-weight': 700, 'font-size': 14, fill: '#999' }, '2Θ');
add(chart, 'text', { transform: `translate(${X(77)} ${Y(927)}) rotate(-90)`, 'text-anchor': 'middle', 'font-family': sans, 'font-weight': 700, 'font-size': 14, fill: '#999' }, 'Intensity (CPS)');
const peaks = [208,1312,224,1306,237,1312,283,1306,302,1230,316,1287,328,1251,341,1306,363,1306,370,1241,388,1209,396,694,410,1224,403,1248,420,1299,434,1270,448,1289,461,1302,480,1103,489,1312,508,1267,518,1185,533,1270,556,1299,575,1302,583,1289,594,1297,610,1276,627,1289,645,1312,659,1302,685,1276,694,1227,710,1302,742,1297,766,1263,788,1309,802,1309,816,1306,828,1309,851,1302,866,1309,886,1306,901,1299,923,1306,953,1306,982,1309,991,1289,1008,1299,1018,1286,1038,1306,1058,1306,1078,1302,1101,1286,1115,1302,1138,1309,1153,1309,1188,1306,1208,1309,1219,1289,1231,1237,1244,1297,1254,1309,1289,1293,1307,1293,1326,1309,1354,1312,1377,1263,1391,1273,1407,1293,1424,1221,1450,1263,1460,1286,1470,1302,1495,1281,
226,1312,292,1309,318,1306,330,1309,370,1260,363,1312,391,1289,401,953,407,1263,430,1306,438,1263,466,1302,476,1276,484,1300,495,1314,510,1289,526,1315,560,1308,568,1308,577,1310,600,1289,606,1306,620,1312,634,1283,633,1293,650,1312,666,1308,687,1286,712,1312,720,1315,733,1314,744,1312,756,1314,768,1286,780,1312,788,1312,824,1312,845,1315,852,1302,903,1312,917,1314,926,1312,941,1314,948,1306,958,1308,980,1312,990,1289,1006,1299,1013,1310,1040,1312,1065,1314,1074,1308,1085,1310,1108,1309,1120,1315,1134,1311,1146,1309,1160,1314,1170,1314,1180,1309,1190,1310,1200,1312,1214,1302,1224,1306,1249,1312,1284,1314,1298,1309,1350,1312,1371,1314,1385,1283,1394,1286,1402,1312,1428,1309,1448,1300,1474,1312];
for (let i = 0; i < peaks.length; i += 2) add(chart, 'rect', { x: X(peaks[i] - 4.8), y: Y(peaks[i + 1]), width: 4.9, height: Y(1321) - Y(peaks[i + 1]), fill: '#4cbcb4', 'fill-opacity': .52 });
```
